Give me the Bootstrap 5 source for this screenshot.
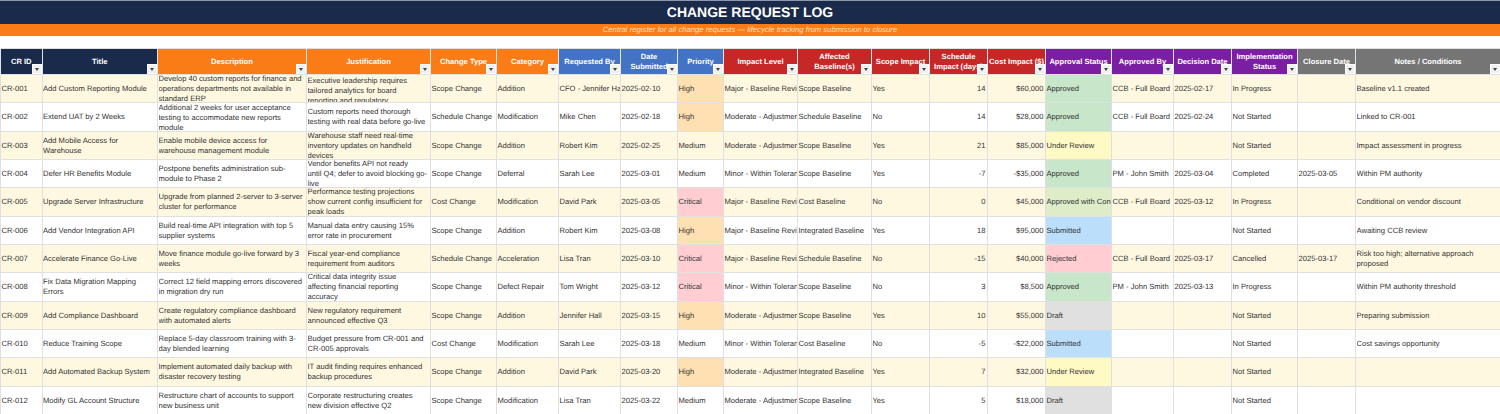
<!DOCTYPE html>
<html lang="en">
<head>
  <meta charset="UTF-8">
  <title>Change Request Log</title>
  <link href="https://cdn.jsdelivr.net/npm/bootstrap@5.3.3/dist/css/bootstrap.min.css" rel="stylesheet">
  <style>
    html, body {
      height: 414px;
      overflow: hidden;
    }

    body {
      font-family: "Liberation Sans", Arial, sans-serif;
      font-size: 7.6px;
      line-height: 10px;
      color: #333;
      background: #fff;
      text-rendering: geometricPrecision;
    }

    .title-bar {
      height: 24px;
      background: #1a2a4a;
      border-top: 1px solid #8d97ad;
      font-size: 14px;
      line-height: 23px;
    }

    .sub-bar {
      height: 12px;
      background: #f97c16;
      font-size: 7.7px;
      line-height: 12px;
      margin-bottom: 11.5px;
      color: #ffe3c4;
    }

    .log-table {
      table-layout: fixed;
      width: 1500px;
      border-color: #e0e0e0;
      font-size: 7.6px;
      line-height: 10px;
    }

    .log-table th, .log-table td {
      padding: 1px 1.5px 0 .5px;
      overflow: hidden;
      vertical-align: middle;
    }

    .log-table th {
      position: relative;
      height: 26.5px;
      padding: 1px 1px 0;
      color: #fff;
      text-align: center;
      font-size: 7.6px;
      line-height: 10px;
      border-color: #dfe3ea;
    }

    .log-table td {
      height: 28.33px;
      white-space: nowrap;
      color: #333;
    }

    .log-table td.wrap {
      white-space: normal;
      padding: 0 3px 0 .5px;
    }

    .clip {
      height: 27.3px;
      padding-top: 1px;
      overflow: hidden;
    }

    .log-table tbody tr:nth-child(odd) td { background-color: #fff8e1; }

    .log-table th.h-navy { background-color: #1a2a4a; }
    .log-table th.h-orange { background-color: #f97c16; }
    .log-table th.h-blue { background-color: #4472c4; }
    .log-table th.h-red { background-color: #c62828; }
    .log-table th.h-purple { background-color: #7b1fa2; }
    .log-table th.h-grey { background-color: #757575; }

    .log-table tbody tr td.st-high { background-color: #ffe0b2; }
    .log-table tbody tr td.st-critical { background-color: #ffcdd2; }
    .log-table tbody tr td.st-approved { background-color: #c8e6c9; }
    .log-table tbody tr td.st-cond { background-color: #dcedc8; }
    .log-table tbody tr td.st-review { background-color: #fff9c4; }
    .log-table tbody tr td.st-submitted { background-color: #bbdefb; }
    .log-table tbody tr td.st-rejected { background-color: #ffcdd2; }
    .log-table tbody tr td.st-draft { background-color: #e0e0e0; }

    .filter-btn {
      position: absolute;
      right: 0;
      bottom: 0;
      width: 10px;
      height: 10px;
      background: #f0f0f0;
      border: 1px solid #fff;
    }

    .filter-btn::after {
      content: "";
      position: absolute;
      left: 2px;
      top: 3px;
      border-left: 2.5px solid transparent;
      border-right: 2.5px solid transparent;
      border-top: 3px solid #444;
    }
  </style>
</head>
<body>

<div class="title-bar text-center text-white fw-bold">CHANGE REQUEST LOG</div>
<div class="sub-bar text-center fst-italic">Central register for all change requests — lifecycle tracking from submission to closure</div>

<table class="table table-bordered mb-0 log-table">
  <colgroup id="cols"></colgroup>
  <thead><tr id="headRow"></tr></thead>
  <tbody id="rows"></tbody>
</table>

<script src="https://cdn.jsdelivr.net/npm/bootstrap@5.3.3/dist/js/bootstrap.bundle.min.js"></script>
<script>
  const columns = [
    ["CR ID", 41.5, "navy"], ["Title", 115.5, "navy"], ["Description", 149, "orange"], ["Justification", 124, "orange"],
    ["Change Type", 66, "orange"], ["Category", 62, "orange"], ["Requested By", 62, "blue"], ["Date Submitted", 57, "blue"],
    ["Priority", 46, "blue"], ["Impact Level", 74, "red"], ["Affected Baseline(s)", 74, "red"], ["Scope Impact", 58, "red"],
    ["Schedule Impact (days)", 58, "red"], ["Cost Impact ($)", 58, "red text-nowrap"], ["Approval Status", 66, "purple"], ["Approved By", 62, "purple"],
    ["Decision Date", 58, "purple"], ["Implementation Status", 66, "purple"], ["Closure Date", 58, "grey"], ["Notes / Conditions", 145, "grey"]
  ];

  const MAJOR = "Major - Baseline Revision", MODERATE = "Moderate - Adjustment", MINOR = "Minor - Within Tolerance";
  const CCB = "CCB - Full Board", PM = "PM - John Smith";

  const data = [
    ["CR-001", "Add Custom Reporting Module", "Develop 40 custom reports for finance and operations departments not available in standard ERP", "Executive leadership requires tailored analytics for board reporting and regulatory compliance", "Scope Change", "Addition", "CFO - Jennifer Hall", "2025-02-10", "High", MAJOR, "Scope Baseline", "Yes", "14", "$60,000", "Approved", CCB, "2025-02-17", "In Progress", "", "Baseline v1.1 created"],
    ["CR-002", "Extend UAT by 2 Weeks", "Additional 2 weeks for user acceptance testing to accommodate new reports module", "Custom reports need thorough testing with real data before go-live", "Schedule Change", "Modification", "Mike Chen", "2025-02-18", "High", MODERATE, "Schedule Baseline", "No", "14", "$28,000", "Approved", CCB, "2025-02-24", "Not Started", "", "Linked to CR-001"],
    ["CR-003", "Add Mobile Access for Warehouse", "Enable mobile device access for warehouse management module", "Warehouse staff need real-time inventory updates on handheld devices", "Scope Change", "Addition", "Robert Kim", "2025-02-25", "Medium", MODERATE, "Scope Baseline", "Yes", "21", "$85,000", "Under Review", "", "", "Not Started", "", "Impact assessment in progress"],
    ["CR-004", "Defer HR Benefits Module", "Postpone benefits administration sub-module to Phase 2", "Vendor benefits API not ready<br>until Q4; defer to avoid blocking go-<br>live", "Scope Change", "Deferral", "Sarah Lee", "2025-03-01", "Medium", MINOR, "Scope Baseline", "Yes", "-7", "-$35,000", "Approved", PM, "2025-03-04", "Completed", "2025-03-05", "Within PM authority"],
    ["CR-005", "Upgrade Server Infrastructure", "Upgrade from planned 2-server to 3-server cluster for performance", "Performance testing projections show current config insufficient for peak loads", "Cost Change", "Modification", "David Park", "2025-03-05", "Critical", MAJOR, "Cost Baseline", "No", "0", "$45,000", "Approved with Conditions", CCB, "2025-03-12", "In Progress", "", "Conditional on vendor discount"],
    ["CR-006", "Add Vendor Integration API", "Build real-time API integration with top 5 supplier systems", "Manual data entry causing 15% error rate in procurement", "Scope Change", "Addition", "Robert Kim", "2025-03-08", "High", MAJOR, "Integrated Baseline", "Yes", "18", "$95,000", "Submitted", "", "", "Not Started", "", "Awaiting CCB review"],
    ["CR-007", "Accelerate Finance Go-Live", "Move finance module go-live forward by 3 weeks", "Fiscal year-end compliance requirement from auditors", "Schedule Change", "Acceleration", "Lisa Tran", "2025-03-10", "Critical", MAJOR, "Schedule Baseline", "No", "-15", "$40,000", "Rejected", CCB, "2025-03-17", "Cancelled", "2025-03-17", "Risk too high; alternative approach proposed"],
    ["CR-008", "Fix Data Migration Mapping Errors", "Correct 12 field mapping errors discovered in migration dry run", "Critical data integrity issue<br>affecting financial reporting<br>accuracy", "Scope Change", "Defect Repair", "Tom Wright", "2025-03-12", "Critical", MINOR, "Scope Baseline", "No", "3", "$8,500", "Approved", PM, "2025-03-13", "In Progress", "", "Within PM authority threshold"],
    ["CR-009", "Add Compliance Dashboard", "Create regulatory compliance dashboard with automated alerts", "New regulatory requirement announced effective Q3", "Scope Change", "Addition", "Jennifer Hall", "2025-03-15", "High", MODERATE, "Scope Baseline", "Yes", "10", "$55,000", "Draft", "", "", "Not Started", "", "Preparing submission"],
    ["CR-010", "Reduce Training Scope", "Replace 5-day classroom training with 3-day blended learning", "Budget pressure from CR-001 and CR-005 approvals", "Cost Change", "Modification", "Sarah Lee", "2025-03-18", "Medium", MINOR, "Cost Baseline", "No", "-5", "-$22,000", "Submitted", "", "", "Not Started", "", "Cost savings opportunity"],
    ["CR-011", "Add Automated Backup System", "Implement automated daily backup with disaster recovery testing", "IT audit finding requires enhanced backup procedures", "Scope Change", "Addition", "David Park", "2025-03-20", "High", MODERATE, "Integrated Baseline", "Yes", "7", "$32,000", "Under Review", "", "", "Not Started", "", ""],
    ["CR-012", "Modify GL Account Structure", "Restructure chart of accounts to support new business unit", "Corporate restructuring creates new division effective Q2", "Scope Change", "Modification", "Lisa Tran", "2025-03-22", "Medium", MODERATE, "Scope Baseline", "Yes", "5", "$18,000", "Draft", "", "", "Not Started", "", ""]
  ];

  const statusClass = {
    "High": "st-high", "Critical": "st-critical", "Approved": "st-approved", "Approved with Conditions": "st-cond",
    "Under Review": "st-review", "Submitted": "st-submitted", "Rejected": "st-rejected", "Draft": "st-draft"
  };
  const wrapCols = [1, 2, 3, 19];
  const numCols = [12, 13];

  columns.forEach(c => {
    const col = document.createElement("col");
    col.style.width = c[1] + "px";
    document.getElementById("cols").appendChild(col);
  });

  document.getElementById("headRow").innerHTML = columns.map(c =>
    `<th class="h-${c[2]}">${c[0]}<span class="filter-btn"></span></th>`).join("");

  document.getElementById("rows").innerHTML = data.map((row, r) => "<tr>" + row.map((val, i) => {
    const cls = [];
    if (numCols.includes(i)) cls.push("text-end");
    if (wrapCols.includes(i)) {
      cls.push("wrap");
      // CR-001 justification runs to four lines, so it sits against the top of the cell
      const inner = r === 0 && i === 3 ? "align-items-start" : "align-items-center";
      return `<td class="${cls.join(" ")}"><div class="clip d-flex ${inner}"><div>${val}</div></div></td>`;
    }
    if ((i === 8 || i === 14) && statusClass[val]) cls.push(statusClass[val]);
    return `<td class="${cls.join(" ")}">${val}</td>`;
  }).join("") + "</tr>").join("");
</script>

</body>
</html>
